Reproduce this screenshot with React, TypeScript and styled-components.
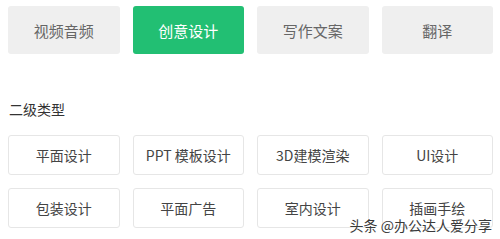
import styled, { createGlobalStyle } from "styled-components";

const GlobalStyle = createGlobalStyle`
  html, body {
    margin: 0;
    padding: 0;
    background: #fff;
    font-family: "Noto Sans CJK SC", "Noto Sans", sans-serif;
  }
`;

const Page = styled.div`
  position: relative;
  width: 500px;
  height: 239px;
  overflow: hidden;
  padding: 6px 7px 0 8px;
  box-sizing: border-box;
`;

const Grid = styled.div`
  display: grid;
  grid-template-columns: repeat(4, 1fr);
  column-gap: 13px;
  row-gap: 13px;
`;

const TabButton = styled.div<{ $active?: boolean }>`
  height: 48px;
  border-radius: 3px;
  display: flex;
  align-items: center;
  justify-content: center;
  font-size: 15px;
  color: ${(p) => (p.$active ? "#fff" : "#666")};
  background: ${(p) => (p.$active ? "#22bf73" : "#efefef")};
`;

const SectionTitle = styled.div`
  margin: 46px 0 17px 1px;
  font-size: 14px;
  line-height: 18px;
  color: #333;
`;

const TagButton = styled.div`
  height: 40px;
  border: 1px solid #e6e6e6;
  border-radius: 3px;
  box-sizing: border-box;
  display: flex;
  align-items: center;
  justify-content: center;
  font-size: 14px;
  color: #444;
  background: #fff;
`;

const Watermark = styled.div`
  position: absolute;
  right: 8px;
  bottom: 6px;
  font-size: 14px;
  line-height: 16px;
  color: #3a3a3a;
  text-shadow: 0 0 2px #fff, 0 0 2px #fff;
`;

const tabs = ["视频音频", "创意设计", "写作文案", "翻译"];
const tags = [
  "平面设计",
  "PPT 模板设计",
  "3D建模渲染",
  "UI设计",
  "包装设计",
  "平面广告",
  "室内设计",
  "插画手绘",
];

export default function App() {
  return (
    <>
      <GlobalStyle />
      <Page>
        <Grid>
          {tabs.map((t, i) => (
            <TabButton key={t} $active={i === 1}>
              {t}
            </TabButton>
          ))}
        </Grid>
        <SectionTitle>二级类型</SectionTitle>
        <Grid>
          {tags.map((t) => (
            <TagButton key={t}>{t}</TagButton>
          ))}
        </Grid>
        <Watermark>头条 @办公达人爱分享</Watermark>
      </Page>
    </>
  );
}
